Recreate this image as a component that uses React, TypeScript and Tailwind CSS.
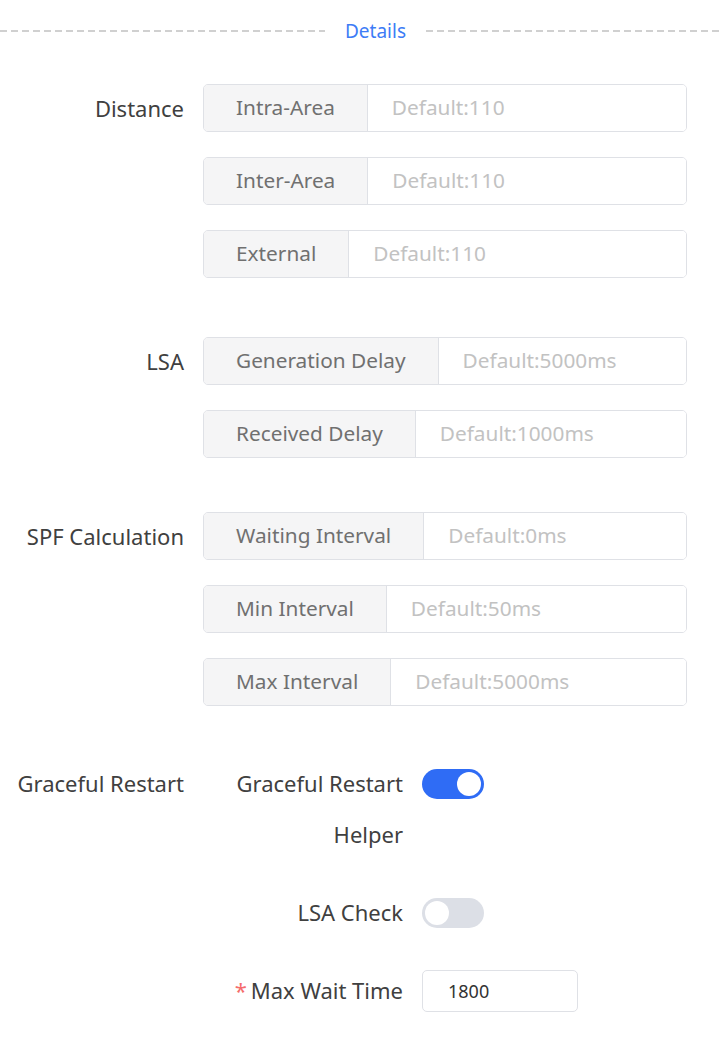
import { useState } from "react";

const font = { fontFamily: '"Noto Sans", "Open Sans", Arial, sans-serif' };

type Field = { label: string; placeholder: string };

function AddonInput({ label, placeholder }: Field) {
  return (
    <div className="flex h-12 w-full rounded-[5px] border border-[#dfe1e6] overflow-hidden">
      <div className="flex items-center px-8 bg-[#f5f5f6] border-r border-[#dfe1e6] text-[20.8px] text-[#707070] whitespace-nowrap">
        {label}
      </div>
      <input
        className="flex-1 min-w-0 pl-6 text-[20.8px] text-[#333] outline-none placeholder:text-[#c2c2c2] bg-white"
        placeholder={placeholder}
      />
    </div>
  );
}

function Group({ title, fields, className }: { title: string; fields: Field[]; className?: string }) {
  return (
    <div className={"flex " + (className ?? "")}>
      <div className="w-[184px] shrink-0 h-12 flex items-center justify-end text-[22px] text-[#404040] whitespace-nowrap">
        {title}
      </div>
      <div className="ml-[19px] w-[484px] flex flex-col gap-[25px]">
        {fields.map((f) => (
          <AddonInput key={f.label} {...f} />
        ))}
      </div>
    </div>
  );
}

function Toggle({ on, onClick }: { on: boolean; onClick: () => void }) {
  return (
    <button
      onClick={onClick}
      className={
        "w-[62px] h-[30px] rounded-full p-[3px] flex items-center " +
        (on ? "bg-[#2f6cf5] justify-end" : "bg-[#dcdfe6] justify-start")
      }
    >
      <span className="w-6 h-6 rounded-full bg-white block" />
    </button>
  );
}

function SubRow({ label, required, children }: { label: string; required?: boolean; children: React.ReactNode }) {
  return (
    <div className="flex items-start">
      <div className="w-[219px] shrink-0 pl-[40px] text-right text-[22px] leading-[51px] text-[#404040]">
        {required && <span className="text-[#f56c6c] mr-1">*</span>}
        {label}
      </div>
      <div className="ml-[19px] h-[51px] flex items-center">{children}</div>
    </div>
  );
}

export default function App() {
  const [helper, setHelper] = useState(true);
  const [lsaCheck, setLsaCheck] = useState(false);

  return (
    <div className="min-h-screen bg-white pt-5" style={font}>
      <div className="flex items-center h-[22px]">
        <div className="w-[325px] h-[2px] bg-[repeating-linear-gradient(to_right,#d0d0d0_0_7px,transparent_7px_11px)]" />
        <span className="px-5 text-[19px] text-[#3d7cf6]">Details</span>
        <div className="flex-1 h-[2px] bg-[repeating-linear-gradient(to_right,#d0d0d0_0_7px,transparent_7px_11px)]" />
      </div>

      <Group
        className="mt-[42px]"
        title="Distance"
        fields={[
          { label: "Intra-Area", placeholder: "Default:110" },
          { label: "Inter-Area", placeholder: "Default:110" },
          { label: "External", placeholder: "Default:110" },
        ]}
      />
      <Group
        className="mt-[59px]"
        title="LSA"
        fields={[
          { label: "Generation Delay", placeholder: "Default:5000ms" },
          { label: "Received Delay", placeholder: "Default:1000ms" },
        ]}
      />
      <Group
        className="mt-[54px]"
        title="SPF Calculation"
        fields={[
          { label: "Waiting Interval", placeholder: "Default:0ms" },
          { label: "Min Interval", placeholder: "Default:50ms" },
          { label: "Max Interval", placeholder: "Default:5000ms" },
        ]}
      />

      <div className="flex mt-[52px]">
        <div className="w-[184px] shrink-0 text-right text-[22px] leading-[51px] text-[#404040] whitespace-nowrap">
          Graceful Restart
        </div>
        <div className="flex flex-col gap-[27px]">
          <SubRow label="Graceful Restart Helper">
            <Toggle on={helper} onClick={() => setHelper(!helper)} />
          </SubRow>
          <SubRow label="LSA Check">
            <Toggle on={lsaCheck} onClick={() => setLsaCheck(!lsaCheck)} />
          </SubRow>
          <SubRow label="Max Wait Time" required>
            <input
              defaultValue="1800"
              className="w-[156px] h-[42px] rounded-[5px] border border-[#dfe1e6] pl-[25px] text-[18px] text-[#333] outline-none"
            />
          </SubRow>
        </div>
      </div>
    </div>
  );
}
